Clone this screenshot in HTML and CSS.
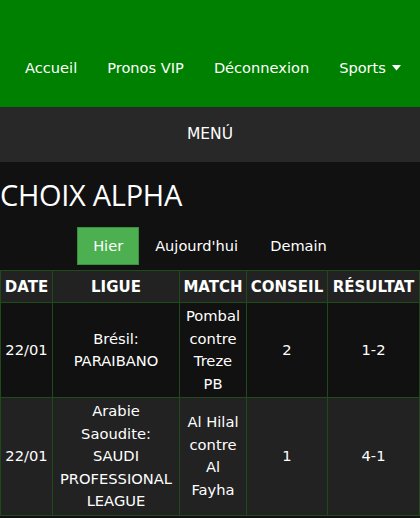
FILE: index.html
```html
<!DOCTYPE html>
<html lang="fr">
<head>
<meta charset="utf-8">
<link rel="stylesheet" href="styles.css">
</head>
<body>
<header class="topbar">
  <nav class="nav">
    <a class="nav-link">Accueil</a>
    <a class="nav-link">Pronos VIP</a>
    <a class="nav-link">Déconnexion</a>
    <a class="nav-link">Sports <svg class="caret" width="9" height="6" viewBox="0 0 9 6"><path d="M0 0H9L4.5 5.5Z" fill="#fff"/></svg></a>
  </nav>
</header>
<div class="menubar">MENÚ</div>
<main class="content">
  <h1 class="title">CHOIX ALPHA</h1>
  <div class="tabs">
    <a class="tab active">Hier</a>
    <a class="tab">Aujourd'hui</a>
    <a class="tab">Demain</a>
  </div>
  <table class="picks">
    <colgroup>
      <col class="c-date"><col class="c-league"><col class="c-match"><col class="c-tip"><col class="c-res">
    </colgroup>
    <thead>
      <tr><th>DATE</th><th>LIGUE</th><th>MATCH</th><th>CONSEIL</th><th>RÉSULTAT</th></tr>
    </thead>
    <tbody>
      <tr class="row-odd"><td>22/01</td><td>Brésil: PARAIBANO</td><td>Pombal contre Treze PB</td><td>2</td><td>1-2</td></tr>
      <tr class="row-even"><td>22/01</td><td>Arabie Saoudite: SAUDI PROFESSIONAL LEAGUE</td><td>Al Hilal contre Al Fayha</td><td>1</td><td>4-1</td></tr>
    </tbody>
  </table>
</main>
</body>
</html>
```

FILE: styles.css
```css
html, body {
  margin: 0;
  padding: 0;
  background: #111111;
  color: #ffffff;
  font-family: "DejaVu Sans", Verdana, sans-serif;
  font-size: 14.6px;
}
.topbar {
  background: #008000;
  height: 107px;
  box-sizing: border-box;
  padding-top: 56px;
}
.nav {
  display: flex;
  justify-content: center;
  padding-left: 6px;
}
.nav-link {
  color: #ffffff;
  padding: 0 15px;
  font-size: 14.6px;
  line-height: 24px;
  display: flex;
  align-items: center;
  gap: 6px;
}
.caret { display: block; }
.menubar {
  background: #282828;
  height: 55px;
  line-height: 55px;
  text-align: center;
  font-size: 15.5px;
}
.content { padding: 0; }
.title {
  font-family: "Open Sans", "Noto Sans", sans-serif;
  font-weight: 400;
  font-size: 29px;
  margin: 0;
  padding-top: 14px;
  line-height: 38px;
  letter-spacing: -0.3px;
}
.tabs {
  display: flex;
  justify-content: center;
  margin-top: 13px;
}
.tab {
  padding: 0 16px;
  height: 38px;
  line-height: 38px;
  font-size: 14.6px;
  color: #ffffff;
  box-sizing: border-box;
}
.tab.active {
  background: #4caf50;
  border: 1px solid #3b8f3e;
  line-height: 36px;
  padding: 0 15px;
}
.picks {
  margin-top: 5px;
  width: 419px;
  border-collapse: collapse;
  table-layout: fixed;
}
.c-date { width: 52px; }
.c-league { width: 127px; }
.c-match { width: 67px; }
.c-tip { width: 81px; }
.c-res { width: 92px; }
.picks th, .picks td {
  border: 1px solid #1f4a1a;
  text-align: center;
  padding: 2px 5px;
}
.picks th {
  background: #222222;
  font-weight: 700;
  font-size: 15px;
  height: 31px;
  padding: 0;
  white-space: nowrap;
}
.picks td {
  line-height: 22.5px;
  font-size: 14.7px;
}
.picks td:first-child { padding: 2px 1px; }
.row-odd td { background: #111111; }
.row-even td { background: #222222; }
```
